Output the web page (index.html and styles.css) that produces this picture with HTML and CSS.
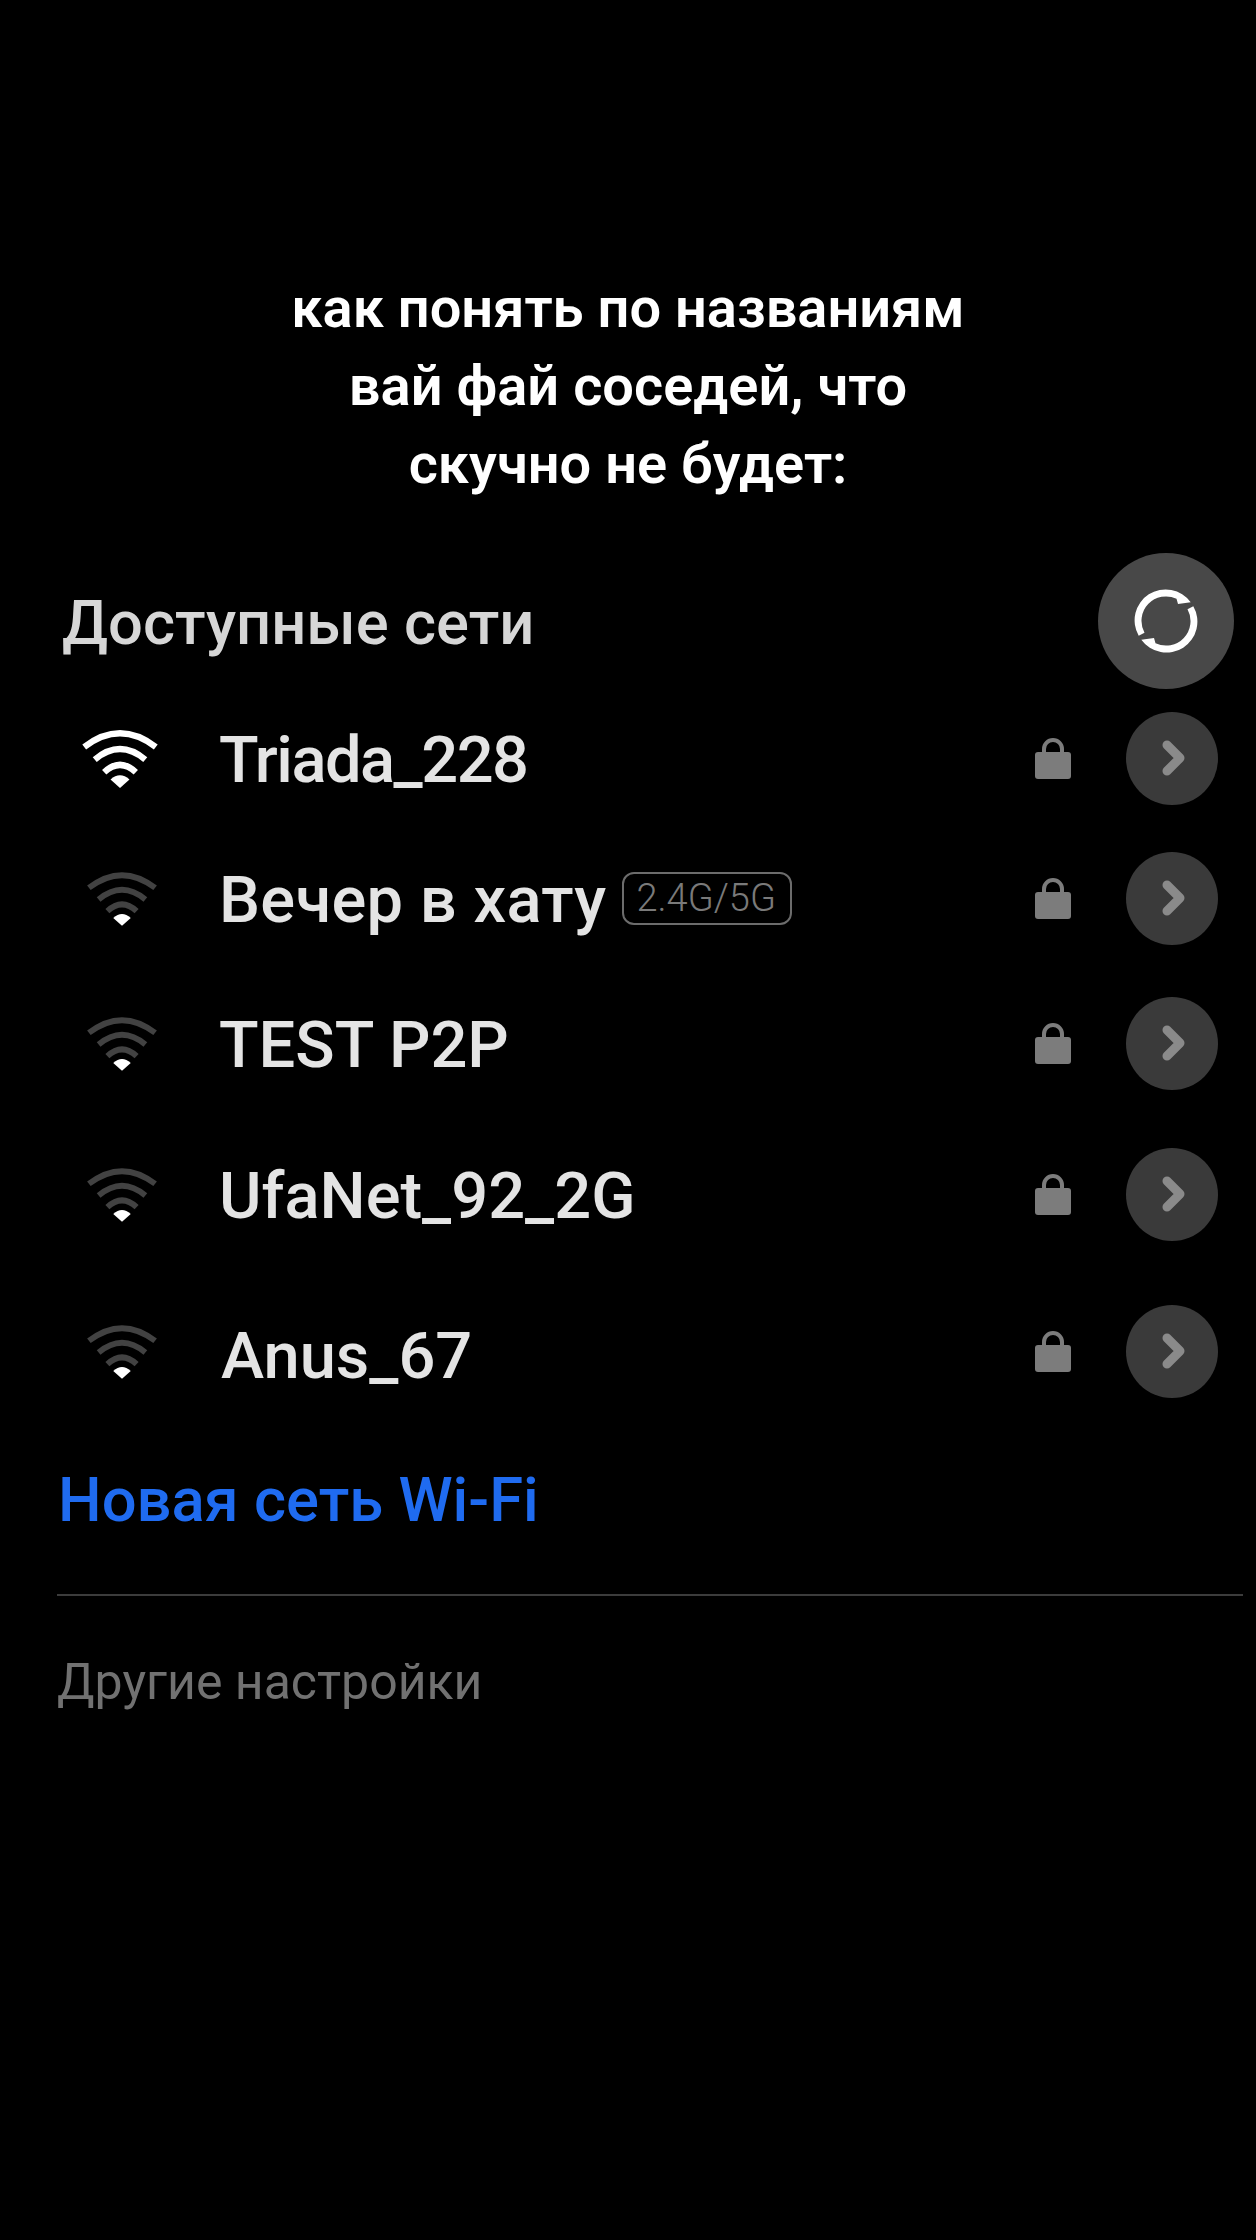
FILE: index.html
```html
<!DOCTYPE html>
<html lang="ru">
<head>
    <title>Доступные сети</title>
    <meta charset="UTF-8">
    <meta name="viewport" content="width=device-width, initial-scale=1.0">
    <link rel="stylesheet" href="styles.css">
</head>
<body>
    <svg class="defs" width="0" height="0" aria-hidden="true">
        <symbol id="wifi" viewBox="0 0 76 56">
            <path class="arc" d="M4 17Q38 -9 72 17"/>
            <path class="arc" d="M14 29Q38 9 62 29"/>
            <path class="arc" d="M23 41Q38 27 53 41"/>
            <path class="dot" d="M29 48Q38 40 47 48L38 56Z"/>
        </symbol>
        <symbol id="lock" viewBox="0 0 36 42">
            <path class="shackle" d="M9 17V12A9 9 0 0 1 27 12V17"/>
            <rect class="lock-body" x="0" y="15" width="36" height="27" rx="3"/>
        </symbol>
        <symbol id="chevron" viewBox="0 0 92 92">
            <path class="chevron-line" d="M41 33L54 46L41 59"/>
        </symbol>
    </svg>

    <h1 class="title">как понять по названиям<br>вай фай соседей, что<br>скучно не будет:</h1>

    <div class="heading">
        <h2 class="heading-text">Доступные сети</h2>
        <button class="refresh" aria-label="Обновить">
            <svg width="80" height="80" viewBox="0 0 80 80">
                <path class="refresh-arc" d="M12.7 54.8A31 31 0 0 1 64.7 21.2L52 23L50.5 17.8A24.5 24.5 0 0 0 18.5 51.7Z"/>
                <path class="refresh-arc" d="M12.7 54.8A31 31 0 0 1 64.7 21.2L52 23L50.5 17.8A24.5 24.5 0 0 0 18.5 51.7Z" transform="rotate(180 40 40)"/>
            </svg>
        </button>
    </div>

    <ul class="networks">
        <li class="network network-1">
            <svg class="wifi wifi-full"><use href="#wifi"/></svg>
            <span class="name">Triada_228</span>
            <svg class="lock"><use href="#lock"/></svg>
            <button class="more"><svg width="92" height="92"><use href="#chevron"/></svg></button>
        </li>
        <li class="network network-2">
            <svg class="wifi"><use href="#wifi"/></svg>
            <span class="name">Вечер в хату</span>
            <span class="badge">2.4G/5G</span>
            <svg class="lock"><use href="#lock"/></svg>
            <button class="more"><svg width="92" height="92"><use href="#chevron"/></svg></button>
        </li>
        <li class="network network-3">
            <svg class="wifi"><use href="#wifi"/></svg>
            <span class="name">TEST P2P</span>
            <svg class="lock"><use href="#lock"/></svg>
            <button class="more"><svg width="92" height="92"><use href="#chevron"/></svg></button>
        </li>
        <li class="network network-4">
            <svg class="wifi"><use href="#wifi"/></svg>
            <span class="name">UfaNet_92_2G</span>
            <svg class="lock"><use href="#lock"/></svg>
            <button class="more"><svg width="92" height="92"><use href="#chevron"/></svg></button>
        </li>
        <li class="network network-5">
            <svg class="wifi"><use href="#wifi"/></svg>
            <span class="name">Anus_67</span>
            <svg class="lock"><use href="#lock"/></svg>
            <button class="more"><svg width="92" height="92"><use href="#chevron"/></svg></button>
        </li>
    </ul>

    <div class="new-network">Новая сеть Wi-Fi</div>
    <div class="divider"></div>
    <div class="other">Другие настройки</div>
</body>
</html>
```

FILE: styles.css
```css
body {
    margin: 0;
    background-color: #000000;
    font-family: Roboto, "Liberation Sans", sans-serif;
    height: 2240px;
    overflow: hidden;
}

.defs {
    position: absolute;
}

.title {
    margin: 0;
    padding-top: 269px;
    text-align: center;
    font-size: 56px;
    line-height: 78px;
    font-weight: 600;
    color: #ffffff;
}

.heading {
    display: flex;
    align-items: center;
    justify-content: space-between;
    height: 136px;
    margin-top: 50px;
    padding: 0 22px 0 62px;
}

.heading-text {
    margin: 0;
    padding-top: 4px;
    font-size: 61.5px;
    font-weight: 500;
    color: #d6d6d6;
}

.refresh {
    display: flex;
    align-items: center;
    justify-content: center;
    width: 136px;
    height: 136px;
    padding: 0;
    border: none;
    border-radius: 50%;
    background-color: #484848;
}

.refresh-arc {
    fill: #ffffff;
}

.networks {
    list-style: none;
    margin: 0;
    padding: 0;
}

.network {
    display: flex;
    align-items: center;
    padding: 0 38px 0 85px;
}

.network-1 { height: 138px; }
.network-2 { height: 142px; }
.network-3 { height: 148px; }
.network-4 { height: 154px; }
.network-5 { height: 160px; }

.wifi {
    flex: none;
    width: 74px;
    height: 55px;
    margin-right: 60px;
    color: #424242;
}

.wifi-full {
    width: 80px;
    height: 59px;
    margin-left: -5px;
    margin-right: 59px;
    color: #ffffff;
}

.arc {
    fill: none;
    stroke: currentColor;
    stroke-width: 6;
}

.dot {
    fill: #ffffff;
}

.name {
    padding-top: 3px;
    font-size: 65px;
    font-weight: 500;
    color: #e4e4e4;
}

.network-2 .name {
    letter-spacing: 0.3px;
}

.network-1 .name {
    letter-spacing: -1.5px;
}

.network-5 .name {
    margin-left: 2px;
    padding-top: 9px;
}

.badge {
    margin-left: 16px;
    padding: 0 14px 0 12px;
    height: 49px;
    line-height: 49px;
    border: 2px solid #6c6c6c;
    border-radius: 12px;
    font-size: 38px;
    font-weight: 300;
    color: #7a7a7a;
}

.lock {
    flex: none;
    width: 36px;
    height: 42px;
    margin-left: auto;
    margin-right: 55px;
}

.lock-body {
    fill: #7c7c7c;
}

.shackle {
    fill: none;
    stroke: #7c7c7c;
    stroke-width: 4;
}

.more {
    flex: none;
    width: 92px;
    height: 93px;
    padding: 0;
    border: none;
    border-radius: 50%;
    background-color: #3a3a3a;
}

.more svg {
    display: block;
}

.chevron-line {
    fill: none;
    stroke: #8a8a8a;
    stroke-width: 9;
    stroke-linecap: round;
    stroke-linejoin: round;
}

.new-network {
    height: 136px;
    line-height: 138px;
    padding-left: 58px;
    font-size: 61.5px;
    font-weight: 500;
    color: #1f6bf0;
}

.divider {
    height: 2px;
    margin: 27px 13px 0 57px;
    background-color: #3c3c3c;
}

.other {
    margin-top: 50px;
    padding-left: 57px;
    font-size: 50px;
    line-height: 72px;
    color: #717171;
}
```
